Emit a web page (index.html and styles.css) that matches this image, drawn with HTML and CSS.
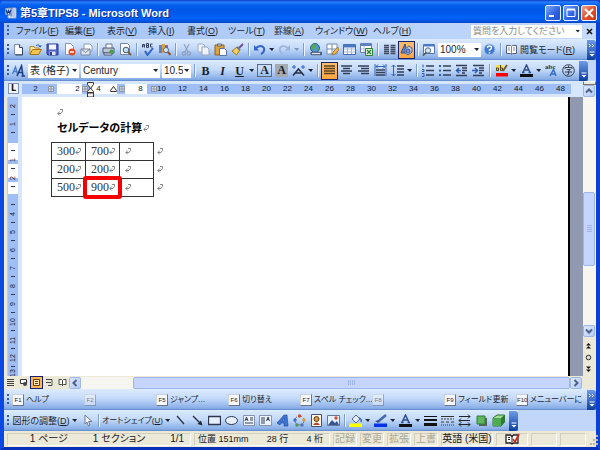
FILE: index.html
```html
<!DOCTYPE html>
<html lang="ja">
<head>
<meta charset="utf-8">
<title>第5章TIPS8 - Microsoft Word</title>
<link rel="stylesheet" href="styles.css">
</head>
<body>
<svg class="defs" aria-hidden="true">
  <symbol id="ret" viewBox="0 0 6 7"><path d="M3 .5h2.5v2L4 4.5H1M2.8 2.5L.8 4.5l2 2" fill="none" stroke="#777" stroke-width=".9"/></symbol>
  <symbol id="chev" viewBox="0 0 8 8"><path d="M1 5.5l3-3 3 3" fill="none" stroke="#4d6185" stroke-width="2"/></symbol>
</svg>
<div class="window">
  <header class="title">
    <svg width="12" height="12" viewBox="0 0 12 12"><path d="M3 1h8v10H3z" fill="#fff" stroke="#8aa5d6"/><path d="M8 3h2M8 5h2M8 7h2M5 9h5" stroke="#6f8dc6"/><path d="M0 1h7v7H0z" fill="#d3e1f8" stroke="#284c9b" stroke-width=".7"/><path d="M1 2.500l1.200 4 1.300-3 1.300 3L6 2.500" fill="none" stroke="#173d91" stroke-width="1.200"/></svg>
    <h1>第5章TIPS8 - Microsoft Word</h1>
    <button class="cap" aria-label="最小化"><svg width="14" height="14" viewBox="0 0 14 14"><path d="M3 10h5" stroke="#fff" stroke-width="2"/></svg></button>
    <button class="cap" aria-label="最大化"><svg width="14" height="14" viewBox="0 0 14 14"><path d="M3 3.500h8v7H3z" fill="none" stroke="#fff"/><path d="M3 3.500h8" stroke="#fff" stroke-width="2"/></svg></button>
    <button class="cap close" aria-label="閉じる"><svg width="14" height="14" viewBox="0 0 14 14"><path d="M3 3l8 8M11 3l-8 8" stroke="#fff" stroke-width="2"/></svg></button>
  </header>

  <nav class="menu">
    <i class="grip"></i>
    <div class="menus">
      <button>ファイル(<u>F</u>)</button><button>編集(<u>E</u>)</button><button>表示(<u>V</u>)</button><button>挿入(<u>I</u>)</button><button>書式(<u>O</u>)</button><button>ツール(<u>T</u>)</button><button>罫線(<u>A</u>)</button><button>ウィンドウ(<u>W</u>)</button><button>ヘルプ(<u>H</u>)</button>
    </div>
    <div class="ask"><input type="text" placeholder="質問を入力してください" aria-label="質問"><i class="tri"></i></div>
    <button class="docclose" aria-label="文書を閉じる"><svg width="7" height="7" viewBox="0 0 7 7"><path d="M1 1l5 5M6 1L1 6" stroke="#111" stroke-width="1.500"/></svg></button>
  </nav>

  <div class="bar">
    <i class="grip"></i>
    <button class="b" aria-label="新規"><svg viewBox="0 0 13 13"><path d="M2.500 1.500h5l3 3v7h-8z" fill="#fff" stroke="#7f8fb0"/><path d="M7.500 1.500v3h3" fill="#dce6f8" stroke="#33435f"/><path d="M10.500 5v7h-7" fill="none" stroke="#33435f"/></svg></button>
    <button class="b" aria-label="開く"><svg viewBox="0 0 13 13"><path d="M1 11V3.500h4l1 1.500h4v2" fill="#ffe9a1" stroke="#b38427"/><path d="M1 11.500l2.500-5h9l-3 5z" fill="#f8c64e" stroke="#a57416"/><path d="M7 2.500q3-2 4 1M9.500 3l2 1 .5-2" fill="none" stroke="#2f5fa8"/></svg></button>
    <button class="b" aria-label="保存"><svg viewBox="0 0 13 13"><path d="M1 1h11v11H2l-1-1z" fill="#5061c4" stroke="#2b398f"/><path d="M3 1.500h7v5H3z" fill="#f3f5ff"/><path d="M3.500 8.500h6V12h-6z" fill="#dfe4f7"/><path d="M4 9h2v3H4z" fill="#2b398f"/></svg></button>
    <button class="b" aria-label="アクセス許可"><svg viewBox="0 0 13 13"><path d="M2.500.5h5l3 3v8h-8z" fill="#fff" stroke="#8794b5"/><circle cx="9" cy="9" r="3.500" fill="#e1491e"/><path d="M7 9h4" stroke="#fff" stroke-width="1.500"/></svg></button>
    <button class="b" aria-label="電子メール"><svg viewBox="0 0 13 13"><path d="M4 1h6l2 2v5H4z" fill="#fff" stroke="#8b98b5"/><path d="M1 6h9v6H1z" fill="#e2e6ef" stroke="#77839c"/><path d="M1 6l4.500 3.500L10 6" fill="none" stroke="#77839c"/></svg></button>
    <i class="sep"></i>
    <button class="b" aria-label="印刷"><svg viewBox="0 0 13 13"><path d="M4 5V1h6v4" fill="#fff" stroke="#68758f"/><path d="M1 5h11v5H1z" fill="#bcc5d4" stroke="#4f5b73"/><path d="M2 10h8v2H2z" fill="#e9edf4" stroke="#4f5b73"/><circle cx="9.500" cy="8.500" r="2" fill="#45a048"/></svg></button>
    <button class="b" aria-label="プレビュー"><svg viewBox="0 0 13 13"><path d="M1.500.5h7l2 2v9h-9z" fill="#fff" stroke="#7585a5"/><circle cx="7" cy="7" r="2.800" fill="#bfe2f2" stroke="#4c5970"/><path d="M9 9l3 3" stroke="#7b5b3b" stroke-width="2"/></svg></button>
    <i class="sep"></i>
    <button class="b" aria-label="スペルチェック"><svg viewBox="0 0 13 13"><path d="M1.500 4.500V1.500h2v3M1.500 3h2M5.500.5v4h2v-4zM5.500 2.500h2M11.500 1h-2v3h2" fill="none" stroke="#333f60"/><path d="M4 8l2.500 4L12 5" fill="none" stroke="#3264c8" stroke-width="2"/></svg></button>
    <button class="b" aria-label="リサーチ"><svg viewBox="0 0 13 13"><path d="M1 2h3v8H1z" fill="#5d7fc9"/><path d="M4 1h3v9H4z" fill="#dba23d"/><path d="M7 2h3v8H7z" fill="#8a5eb0"/><circle cx="8" cy="7" r="2.500" fill="#d8ecfa" stroke="#536384"/><path d="M10 9l2.500 3" stroke="#93502c" stroke-width="2"/></svg></button>
    <i class="sep"></i>
    <button class="b" aria-label="切り取り"><svg viewBox="0 0 13 13"><path d="M4 1l4 8M9 1L5 9" stroke="#8793ad"/><circle cx="4" cy="10.500" r="1.700" fill="none" stroke="#8793ad"/><circle cx="9" cy="10.500" r="1.700" fill="none" stroke="#8793ad"/></svg></button>
    <button class="b" aria-label="コピー"><svg viewBox="0 0 13 13"><path d="M1 1h5l2 2v6H1z" fill="#edf2fb" stroke="#a2aec6"/><path d="M5 4h5l2 2v6H5z" fill="#edf2fb" stroke="#98a5bf"/></svg></button>
    <button class="b" aria-label="貼り付け"><svg viewBox="0 0 13 13"><path d="M1 2h9v10H1z" fill="#dfa13c" stroke="#8f621a"/><path d="M3.500 1h4v2h-4z" fill="#d8dce5" stroke="#5b6578"/><path d="M5.500 5.500h5l2 2v5h-7z" fill="#fff" stroke="#5871a6"/></svg></button>
    <button class="b" aria-label="書式のコピー"><svg viewBox="0 0 13 13"><path d="M12 1L8 5" stroke="#6b4e91" stroke-width="2"/><path d="M6 4l3 3-3.500 5L1 8z" fill="#f4cf62" stroke="#a2781d"/><path d="M6 4l3 3" stroke="#6c7896" stroke-width="2"/></svg></button>
    <i class="sep"></i>
    <button class="b" aria-label="元に戻す"><svg viewBox="0 0 13 13"><path d="M3 5q5-4 8 0 1 4-3 6" fill="none" stroke="#3563c4" stroke-width="2"/><path d="M1 2v5.500h5z" fill="#3563c4"/></svg></button><i class="tri"></i>
    <button class="b" aria-label="やり直し"><svg viewBox="0 0 13 13"><path d="M10 5q-5-4-8 0-1 4 3 6" fill="none" stroke="#9db0d4" stroke-width="1.500"/><path d="M12 2v5.500H7z" fill="#9db0d4"/></svg></button><i class="tri pale"></i>
    <i class="sep wide"></i>
    <button class="b" aria-label="ハイパーリンク"><svg viewBox="0 0 13 13"><circle cx="6" cy="5" r="4.500" fill="#4f97cc" stroke="#2e6384"/><path d="M3 2l3-1 1 3-3 3-2-2zM8 5l2 0-1 4z" fill="#54aa4c"/><path d="M3 10.500h4M8 10.500h4" stroke="#55627d" stroke-width="3.500" stroke-linecap="round"/><path d="M3 10.500h8" stroke="#e4e9f4" stroke-width="1.200"/></svg></button>
    <button class="b" aria-label="罫線"><svg viewBox="0 0 13 13"><path d="M1 1h10v10H1z M6 1v10M1 6h10" fill="#fff" stroke="#7588ae"/><path d="M12 4L7 9l-1 3 3-1 4-4z" fill="#e9b44c" stroke="#986d24" stroke-width=".7"/></svg></button>
    <button class="b" aria-label="表の挿入"><svg viewBox="0 0 13 13"><path d="M.5 1.500h12v10H.5z" fill="#fff" stroke="#426caf"/><path d="M1 3h11" stroke="#4b78c5" stroke-width="3"/><path d="M1 6h11M1 9h11M4.500 4v7M8.500 4v7" stroke="#a5bce1"/></svg></button>
    <button class="b" aria-label="ワークシート"><svg viewBox="0 0 13 13"><path d="M.5.5h11v9H.5z" fill="#fff" stroke="#6580b5"/><path d="M1 2h10" stroke="#5b82c5" stroke-width="2"/><path d="M1 6h5M4 3v6" stroke="#a5bce1"/><path d="M5.500 5.500h7v7h-7z" fill="#e6f3df" stroke="#2f8135"/><path d="M7 7l4 4M11 7l-4 4" stroke="#2f8135" stroke-width="1.400"/></svg></button>
    <i class="sep wide"></i>
    <button class="b" aria-label="段組み"><svg viewBox="0 0 13 13"><path d="M1 2.500h5M1 4.500h5M1 6.500h5M1 8.500h5M1 10.500h5M7.500 2.500h5M7.500 4.500h5M7.500 6.500h5M7.500 8.500h5M7.500 10.500h5" stroke="#414c62" stroke-width="1.400"/></svg></button>
    <button class="b on" aria-label="図形描画"><svg viewBox="0 0 13 13"><path d="M1 10L5 1l2 9z" fill="#5c84d1" stroke="#2e4e96"/><path d="M5 6l4-3 3 2v4l-4 3-3-2z" fill="#c2cbe3" stroke="#51628a"/><circle cx="8" cy="8" r="2" fill="#7c98d8" stroke="#3b5592"/></svg></button>
    <i class="sep"></i>
    <button class="b" aria-label="見出しマップ"><svg viewBox="0 0 13 13"><path d="M1.500 1.500h11v9h-11z" fill="#fff" stroke="#4d76ba"/><path d="M2 2.500h10" stroke="#4d7bcf" stroke-width="2"/><circle cx="6" cy="7.500" r="2.700" fill="#d1ebf5" stroke="#56657e"/><path d="M4 9.500l-3 3" stroke="#5b4a35" stroke-width="1.500"/></svg></button>
    <div class="combo zoom"><select aria-label="ズーム"><option>100%</option></select><i class="tri"></i></div>
    <button class="b" aria-label="ヘルプ"><svg viewBox="0 0 13 13"><circle cx="6.500" cy="6.500" r="5.500" fill="#3f79d3" stroke="#a9c8f4"/><path d="M4.500 5q0-2 2-2t2 1.700Q8.500 6 6.500 7v1M6.500 9v1.400" fill="none" stroke="#fff" stroke-width="1.400"/></svg></button>
    <i class="sep"></i>
    <button class="b" aria-label="閲覧"><svg viewBox="0 0 13 13"><path d="M1.500 2.500h4l1 1 1-1h4v8h-4l-1 1-1-1h-4z" fill="#fff" stroke="#53617c"/><path d="M6.500 3v8M3 5h2M3 7h2M8 5h2M8 7h2" stroke="#7d89a2"/></svg></button>
    <button class="txt">閲覧モード(<u>R</u>)</button>
    <button class="end push" aria-label="オプション"><svg viewBox="0 0 8 18"><path d="M1 3l1.500 1.500L1 6M4 3l1.500 1.500L4 6M1.500 11h5" fill="none" stroke="#fff"/><path d="M1.500 13h5L4 15.500z" fill="#fff"/></svg></button>
  </div>

  <div class="bar">
    <i class="grip"></i>
    <button class="b" aria-label="スタイル"><svg viewBox="0 0 13 13"><path d="M.5 10L3.500 3l2 7M1.500 7.500h3.500" fill="none" stroke="#4579c5" stroke-width="1.300"/><path d="M5 12l4.500-10L11 12M6.500 8.500H11M9.500 12H13" fill="none" stroke="#203f87" stroke-width="1.600"/></svg></button>
    <div class="combo style"><select aria-label="スタイル名"><option>表 (格子)</option></select><i class="tri"></i></div>
    <div class="combo face"><select aria-label="フォント"><option>Century</option></select><i class="tri"></i></div>
    <div class="combo size"><select aria-label="サイズ"><option>10.5</option></select><i class="tri"></i></div>
    <i class="sep"></i>
    <button class="b letter"><b>B</b></button>
    <button class="b letter"><em>I</em></button>
    <button class="b letter"><u>U</u></button><i class="tri"></i>
    <button class="b letter"><span class="boxed">A</span></button>
    <button class="b letter"><span class="shade">A</span></button>
    <button class="b" aria-label="文字の拡大"><svg viewBox="0 0 13 13"><path d="M1 11.500L6.500 5l5.500 6.500M3.500 9h6" fill="none" stroke="#263149" stroke-width="1.600"/><path d="M2 1v4M0 3h4M11 1v4M9 3h4" stroke="#2d62c6"/></svg></button><i class="tri"></i>
    <i class="sep wide"></i>
    <button class="b on" aria-label="両端揃え"><svg viewBox="0 0 13 13"><path d="M1 2h11M1 4.500h11M1 7h11M1 9.500h11" stroke="#594021" stroke-width="1.500"/></svg></button>
    <button class="b" aria-label="中央揃え"><svg viewBox="0 0 13 13"><path d="M1 2h11M3 4.500h7M1 7h11M3 9.500h7" stroke="#333f57" stroke-width="1.500"/></svg></button>
    <button class="b" aria-label="右揃え"><svg viewBox="0 0 13 13"><path d="M1 2h11M4 4.500h8M1 7h11M4 9.500h8" stroke="#333f57" stroke-width="1.500"/></svg></button>
    <button class="b" aria-label="均等割り付け"><svg viewBox="0 0 13 13"><path d="M1 0v12M12 0v12M2 2.500h9M4 .5l-2 2 2 2M9 .5l2 2-2 2" fill="none" stroke="#3264be"/><path d="M2 6h9M2 8.500h9M2 11h9" stroke="#333f57" stroke-width="1.500"/></svg></button>
    <button class="b" aria-label="行間"><svg viewBox="0 0 13 13"><path d="M2.500 1v11M.5 3l2-2 2 2M.5 10l2 2 2-2" fill="none" stroke="#3264be"/><path d="M6 2h7M6 5h7M6 8h7M6 11h7" stroke="#333f57" stroke-width="1.300"/></svg></button><i class="tri"></i>
    <i class="sep"></i>
    <button class="b" aria-label="段落番号"><svg viewBox="0 0 13 13"><path d="M2 .5v3M1 5.500h2v2H1M1 9.500h2v3H1" fill="none" stroke="#2f5cb3"/><path d="M5 2h8M5 6.500h8M5 11h8" stroke="#333f57" stroke-width="1.300"/></svg></button>
    <button class="b" aria-label="箇条書き"><svg viewBox="0 0 13 13"><path d="M1 2h2M1 6.500h2M1 11h2" stroke="#2f5cb3" stroke-width="2"/><path d="M5 2h8M5 6.500h8M5 11h8" stroke="#333f57" stroke-width="1.300"/></svg></button>
    <button class="b" aria-label="インデント解除"><svg viewBox="0 0 13 13"><path d="M1 1.500h11M7 4h5M7 6.500h5M7 9h3M1 11.500h11" stroke="#333f57" stroke-width="1.300"/><path d="M6 6.500H2M4 4L1.500 6.500 4 9" fill="none" stroke="#2f5cb3" stroke-width="1.500"/></svg></button>
    <button class="b" aria-label="インデント"><svg viewBox="0 0 13 13"><path d="M1 1.500h11M7 4h5M7 6.500h5M7 9h3M1 11.500h11" stroke="#333f57" stroke-width="1.300"/><path d="M0 6.500h5M3 4l2.500 2.500L3 9" fill="none" stroke="#2f5cb3" stroke-width="1.500"/></svg></button>
    <i class="sep wide"></i>
    <button class="b" aria-label="蛍光ペン"><svg viewBox="0 0 13 13"><path d="M1 1h7v6H1z" fill="#f7dd52"/><path d="M1.500 4h2v2.500h-2zM5.500 1v5.500h2V4h-2" fill="none" stroke="#4c4420"/><path d="M12 1L8 7" stroke="#785b2c" stroke-width="2"/><path d="M1 9h12v3.500H1z" fill="#f00"/></svg></button><i class="tri"></i>
    <button class="b" aria-label="文字の色"><svg viewBox="0 0 13 13"><path d="M3 8.500L6.500 1 10 8.500M4 6h5M2 8.500h2.500M8.500 8.500H11" fill="none" stroke="#304e8e" stroke-width="1.500"/><path d="M0 10h13v3H0z" fill="#111"/></svg></button><i class="tri"></i>
    <button class="b letter" aria-label="ルビ"><svg viewBox="0 0 13 13"><text x="0" y="5" font-family="Liberation Serif" font-size="7" fill="#333">abc</text><path d="M5 12l3.500-6.500L11 12M6 10h4" fill="none" stroke="#376bc2" stroke-width="1.400"/></svg></button>
    <button class="b" aria-label="囲い文字"><svg viewBox="0 0 13 13"><circle cx="6.500" cy="6.500" r="5.800" fill="none" stroke="#333c4d"/><path d="M6.500 1.500v2M3 5V3.500h7V5M4.500 5.500h4l-2 1.500v3.500l-1.500.5M3 8h7" fill="none" stroke="#333c4d"/></svg></button>
    <i class="sep blank"></i>
    <button class="end" aria-label="オプション"><svg viewBox="0 0 8 18"><path d="M1.500 11h5" stroke="#fff"/><path d="M1.500 13h5L4 15.500z" fill="#fff"/></svg></button>
    <i class="rest"></i>
  </div>

  <main class="work">
    <div class="hrule">
      <span class="tab">L</span>
      <div class="scale">
        <span>2</span><span></span><span>2</span><span>4</span><span></span><span>8</span><span>10</span><span>12</span><span>14</span><span>16</span><span>18</span><span>20</span><span>22</span><span>24</span><span>26</span><span>28</span><span>30</span><span>32</span><span>34</span><span>36</span><span>38</span><span>40</span><span>42</span><span>44</span><span>46</span><span>48</span>
        <svg class="marks" width="140" height="17" viewBox="0 0 140 17"><g stroke="#8e96a6"><path id="m" d="M26.500 5.500h5v5h-5zM29 5v6M26 8h6" fill="#d8dce4"/><use href="#m" x="34"/><use href="#m" x="71"/><use href="#m" x="103"/></g><g fill="#f5f3e8" stroke="#333"><path d="M65.500 1.500h6v2l-3 4-3-4zM65.500 11.500v-1l3-3.500 3 3.500v1zM65.500 12h6v4h-6zM88.500 10.500v-1l3-4 3 4v1z"/></g></svg>
      </div>
    </div>
    <div class="vrule">
      <span>2</span><span>1</span><span></span><span>1</span><span>2</span><span></span><span>4</span><span>5</span><span>6</span><span>7</span><span>8</span><span>9</span><span>10</span><span>11</span><span>12</span><span>13</span>
    </div>
    <article class="page">
      <p><svg class="ret"><use href="#ret"/></svg></p>
      <h2>セルデータの計算<svg class="ret"><use href="#ret"/></svg></h2>
      <table>
        <tr><td>300<svg class="ret"><use href="#ret"/></svg></td><td>700<svg class="ret"><use href="#ret"/></svg></td><td><svg class="ret"><use href="#ret"/></svg></td><td class="eor"><svg class="ret"><use href="#ret"/></svg></td></tr>
        <tr><td>200<svg class="ret"><use href="#ret"/></svg></td><td>200<svg class="ret"><use href="#ret"/></svg></td><td><svg class="ret"><use href="#ret"/></svg></td><td class="eor"><svg class="ret"><use href="#ret"/></svg></td></tr>
        <tr><td>500<svg class="ret"><use href="#ret"/></svg></td><td class="hit">900<svg class="ret"><use href="#ret"/></svg></td><td><svg class="ret"><use href="#ret"/></svg></td><td class="eor"><svg class="ret"><use href="#ret"/></svg></td></tr>
      </table>
    </article>
    <div class="vscroll">
      <i class="split"></i>
      <button class="sb" aria-label="上へ"><svg width="8" height="8"><use href="#chev"/></svg></button>
      <div class="vtrack"><i class="vthumb"><svg width="5" height="7" viewBox="0 0 5 7"><path d="M0 .5h5M0 2.500h5M0 4.500h5M0 6.500h5" stroke="#9db5ee"/></svg></i></div>
      <button class="sb" aria-label="下へ"><svg class="down" width="8" height="8"><use href="#chev"/></svg></button>
      <div class="browse"><svg width="7" height="7" viewBox="0 0 7 7"><path d="M1 3.500L3.500 1 6 3.500zM1 6.500L3.500 4 6 6.500z" fill="#111"/></svg><svg width="7" height="7" viewBox="0 0 7 7"><circle cx="3.500" cy="3.500" r="2.300" fill="#ddd" stroke="#333"/></svg><svg width="7" height="7" viewBox="0 0 7 7"><path d="M1 .5L3.500 3 6 .5zM1 3.500L3.500 6 6 3.500z" fill="#111"/></svg></div>
    </div>
    <div class="hscroll">
      <button class="v" aria-label="下書き"><svg viewBox="0 0 9 9"><path d="M1 1.500h7M1 3.500h7M1 5.500h7M1 7.500h7" stroke="#444"/></svg></button>
      <button class="v" aria-label="Web"><svg viewBox="0 0 9 9"><path d="M1.500 1.500h6v4h-6z" fill="#fff" stroke="#333"/><circle cx="6" cy="6" r="2" fill="#444"/></svg></button>
      <button class="v on" aria-label="印刷レイアウト"><svg viewBox="0 0 9 9"><path d="M1.500 1.500h6v6h-6z" fill="#ffe8b8" stroke="#653e18"/><path d="M3 3.500h3M3 5.500h3" stroke="#653e18"/></svg></button>
      <button class="v" aria-label="アウトライン"><svg viewBox="0 0 9 9"><path d="M1 1.500h6v3M1 4.500h5M3 7.500h4V5" fill="none" stroke="#444"/></svg></button>
      <button class="v" aria-label="閲覧表示"><svg viewBox="0 0 9 9"><path d="M1 1.500h2.500l1 1 1-1H8v5H5.500l-1 1-1-1H1zM4.500 2.500v5" fill="#fff" stroke="#444"/></svg></button>
      <button class="sb" aria-label="左へ"><svg class="left" width="8" height="8"><use href="#chev"/></svg></button>
      <div class="htrack"><i class="hthumb"><svg width="7" height="5" viewBox="0 0 7 5"><path d="M.5 0v5M2.500 0v5M4.500 0v5M6.500 0v5" stroke="#9db5ee"/></svg></i></div>
      <button class="sb" aria-label="右へ"><svg class="right" width="8" height="8"><use href="#chev"/></svg></button>
    </div>
  </main>

  <div class="bar fn">
    <i class="grip"></i>
    <div class="keys">
      <button><kbd>F1</kbd>ヘルプ</button><button disabled><kbd>F2</kbd></button><button><kbd>F5</kbd>ジャンプ...</button><button><kbd>F6</kbd>切り替え</button><button><kbd>F7</kbd>スペル チェック...</button><button disabled><kbd>F8</kbd></button><button><kbd>F9</kbd>フィールド更新</button><button><kbd>F10</kbd>メニューバーに</button>
    </div>
    <button class="end push" aria-label="オプション"><svg viewBox="0 0 8 18"><path d="M1 3l1.500 1.500L1 6M4 3l1.500 1.500L4 6M1.500 11h5" fill="none" stroke="#fff"/><path d="M1.500 13h5L4 15.500z" fill="#fff"/></svg></button>
  </div>

  <div class="bar draw">
    <i class="grip"></i>
    <button class="adjust">図形の調整(<u>D</u>)</button><i class="tri"></i>
    <button class="b" aria-label="選択"><svg viewBox="0 0 13 13"><path d="M4 1v9l2-2 1.500 4 1.500-1-1.500-3.500H11z" fill="#fff" stroke="#6c7a94"/></svg></button>
    <i class="sep"></i>
    <button class="shapes">オートシェイプ(<u>U</u>)</button><i class="tri"></i>
    <button class="b" aria-label="直線"><svg viewBox="0 0 13 13"><path d="M3 2l7 8" stroke="#222b3c" stroke-width="1.200"/></svg></button>
    <button class="b" aria-label="矢印"><svg viewBox="0 0 13 13"><path d="M2 2l8 8" stroke="#222b3c" stroke-width="1.200"/><path d="M11.500 11.500L6.500 10 10 6.500z" fill="#222b3c"/></svg></button>
    <button class="b" aria-label="四角形"><svg viewBox="0 0 13 13"><path d="M.5 2.500h12v8H.5z" fill="#e5effd" stroke="#2d374b" stroke-width="1.300"/></svg></button>
    <button class="b" aria-label="楕円"><svg viewBox="0 0 13 13"><ellipse cx="6.500" cy="6.500" rx="6" ry="4" fill="#e5effd" stroke="#2d374b"/></svg></button>
    <button class="b" aria-label="テキスト"><svg viewBox="0 0 13 13"><path d="M1.500 1.500h11v10h-11z" fill="#eef4fe" stroke="#8392ad"/><path d="M3 7l1.500-4L6 7M3.500 5.500h2M8 4h3M8 6h3M3 9h8" fill="none" stroke="#344158"/></svg></button>
    <button class="b" aria-label="縦書き"><svg viewBox="0 0 13 13"><path d="M.5 1.500h12v10H.5z" fill="#eef4fe" stroke="#8392ad"/><path d="M7.500 7L9 3l1.500 4M8 5.500h2M3 3v7M5 3v7" fill="none" stroke="#344158"/></svg></button>
    <button class="b" aria-label="ワードアート"><svg viewBox="0 0 13 13"><path d="M1 9L8 1h3l1 11H8V9H5l-1 2zM6 7h2V4z" fill="#3d74d3" stroke="#23458f" stroke-width=".6"/></svg></button>
    <button class="b" aria-label="図表"><svg viewBox="0 0 13 13"><circle cx="6.500" cy="6.500" r="4.500" fill="none" stroke="#60718f" stroke-dasharray="3 2"/><circle cx="6.500" cy="2" r="1.700" fill="#d34b2d"/><circle cx="2" cy="6" r="1.700" fill="#3e70cb"/><circle cx="11" cy="6" r="1.700" fill="#db9f2e"/><circle cx="4" cy="11" r="1.700" fill="#4d9950"/><circle cx="9" cy="11" r="1.700" fill="#5573b9"/></svg></button>
    <button class="b" aria-label="クリップアート"><svg viewBox="0 0 13 13"><path d="M1.500.5h10v12h-10z" fill="#fff5df" stroke="#46536b"/><circle cx="6.500" cy="5" r="2.500" fill="#d99a3b" stroke="#583d27"/><path d="M3 11q3.500-5 7 0z" fill="#b63d2c"/></svg></button>
    <button class="b" aria-label="図"><svg viewBox="0 0 13 13"><path d="M.5 1.500h12v10H.5z" fill="#e4effc" stroke="#667690"/><path d="M1 11l4-5 3 3 2-2 2 4z" fill="#365791"/><circle cx="9" cy="4" r="1.700" fill="#cf5033"/></svg></button>
    <i class="sep"></i>
    <button class="b" aria-label="塗りつぶし"><svg viewBox="0 0 13 13"><path d="M3 5l4-4 4 4-4 4z" fill="#e7edf7" stroke="#56657f"/><path d="M10 4q3 1 2 4" fill="none" stroke="#3467be" stroke-width="1.500"/><path d="M0 9.500h13V13H0z" fill="#ff0"/></svg></button><i class="tri"></i>
    <button class="b" aria-label="線の色"><svg viewBox="0 0 13 13"><path d="M12 1L6 6 4 8" stroke="#4569ac" stroke-width="2.500"/><path d="M1 7l4-1-1 3z" fill="#375082"/><path d="M0 9.500h13V13H0z" fill="#0033e8"/></svg></button><i class="tri"></i>
    <button class="b" aria-label="文字色"><svg viewBox="0 0 13 13"><path d="M3 8.500L6.500 1 10 8.500M4 6h5M2 8.500h2.500M8.500 8.500H11" fill="none" stroke="#304e8e" stroke-width="1.500"/><path d="M0 10h13v3H0z" fill="#111"/></svg></button><i class="tri"></i>
    <button class="b" aria-label="線種"><svg viewBox="0 0 13 13"><path d="M0 2.500h13" stroke="#111"/><path d="M0 6h13" stroke="#111" stroke-width="2"/><path d="M0 10.500h13" stroke="#111" stroke-width="3"/></svg></button>
    <button class="b" aria-label="点線"><svg viewBox="0 0 13 13"><path d="M0 2.500h13" stroke="#333"/><path d="M0 5h13" stroke="#333" stroke-dasharray="2 1"/><path d="M0 8h13" stroke="#333" stroke-dasharray="3 2"/><path d="M0 11h13" stroke="#333" stroke-dasharray="1 1"/></svg></button>
    <button class="b" aria-label="矢印種"><svg viewBox="0 0 13 13"><path d="M1 2.500h11M10 .5l2 2-2 2M1 6.500h11M3 4.500l-2 2 2 2M1 10.500h11M10 8.500l2 2-2 2M3 8.500l-2 2 2 2" fill="none" stroke="#222"/></svg></button>
    <button class="b" aria-label="影"><svg viewBox="0 0 13 13"><path d="M4 4h8v8H4z" fill="#56655e"/><path d="M2 2h8v8H2z" fill="#61b65b" stroke="#2f7d38"/></svg></button>
    <button class="b" aria-label="3-D"><svg viewBox="0 0 13 13"><path d="M1 4l4-3h7.500v7L9 12H1z" fill="#a5dc8f" stroke="#2a7434"/><path d="M1 4h8v8H1z" fill="#4dac50"/><path d="M9 4l3.500-3v7L9 12z" fill="#2b7a38"/></svg></button>
    <i class="sep blank"></i>
    <button class="end" aria-label="オプション"><svg viewBox="0 0 8 18"><path d="M1.500 11h5" stroke="#fff"/><path d="M1.500 13h5L4 15.500z" fill="#fff"/></svg></button>
    <i class="rest"></i>
  </div>

  <footer class="status">
    <div class="cell pos"><span>1 ページ</span><span>1 セクション</span><span>1/1</span></div>
    <div class="cell loc"><span>位置 151mm</span><span>28 行</span><span>4 桁</span></div>
    <div class="cell off">記録</div><div class="cell off">変更</div><div class="cell off">拡張</div><div class="cell off">上書</div>
    <div class="cell lang">英語 (米国)</div>
    <div class="cell book"><svg width="15" height="12" viewBox="0 0 15 12"><path d="M1 2h4.500L7 3.500 8.500 2H13v8H8.500L7 11 5.500 10H1z" fill="#fff" stroke="#222" stroke-width="1.300"/><path d="M7 3v8M3 4.500h2M3 6.500h2" stroke="#222"/><path d="M8 6l2 3 4-8" fill="none" stroke="#cf2a1b" stroke-width="1.700"/></svg></div>
    <div class="cell"></div><div class="cell"></div>
    <svg class="sizer" width="10" height="11" viewBox="0 0 10 11"><path d="M7 1h2v2H7zM4 5h2v2H4zM7 5h2v2H7zM1 9h2v2H1zM4 9h2v2H4zM7 9h2v2H7z" fill="#b9b5a0"/></svg>
  </footer>
</div>
</body>
</html>
```
FILE: styles.css
```css
* { box-sizing: border-box; }
body {
  margin: 0;
  font: 10px/14px "Liberation Sans", "Noto Sans CJK JP", sans-serif;
  font-feature-settings: "palt";
  color: #1a1f2b;
}
button, select, input {
  font: inherit;
  font-feature-settings: inherit;
  color: inherit;
  margin: 0;
  padding: 0;
  border: 0;
  background: none;
  white-space: nowrap;
}
button { display: flex; align-items: center; justify-content: center; flex: none; }
svg { display: block; flex: none; }
.defs { position: absolute; width: 0; height: 0; }

.window {
  min-height: 100vh;
  display: flex;
  flex-direction: column;
  background: #ece9d8;
  border: solid #0a3fe0;
  border-width: 0 4px 3px;
  border-color: #0a48e4 #0a3fd8 #0830b8 #0a48e4;
}

/* title bar */
.title {
  height: 23px;
  margin: 0 -4px;
  padding: 2px 3px 0 5px;
  display: flex;
  align-items: center;
  gap: 2px;
  background: linear-gradient(#0a3cc4, #2a7dfa 2px, #0560ee 5px, #0056e4 10px, #0062f8 18px, #0050d8 22px, #0a40b8);
  border-radius: 5px 5px 0 0;
  color: #fff;
}
.title h1 { flex: 1; margin: 0 0 0 1px; font-size: 11px; line-height: 14px; font-weight: bold; text-shadow: 1px 1px #0a2f96; }
.cap { width: 16px; height: 16px; border: 1px solid #e8effd; border-radius: 2px; background: linear-gradient(135deg, #7ba6f6, #2b61e0 60%, #2452cf); }
.cap.close { background: linear-gradient(135deg, #f0a58c, #e2522a 50%, #c93a14); }

/* menu bar */
.menu {
  height: 16px;
  display: flex;
  align-items: center;
  font-size: 9px;
  background: linear-gradient(90deg, #a3c2f6, #c4dafa);
}
.grip { flex: none; width: 2px; height: 12px; margin: 0 1px 0 3px; background: repeating-linear-gradient(#35599c 0 2px, transparent 2px 4px); }
.menus { flex: 1; display: grid; grid-template-columns: 49px 42px 41px 39px 41px 46px 41px 58px 40px; margin-left: 6px; }
.menus button { justify-content: flex-start; }
.ask { display: flex; align-items: center; width: 111px; height: 13px; background: #fff; }
.ask input { flex: 1; min-width: 0; height: 13px; padding-left: 2px; }
.ask input::placeholder { color: #8b8b85; opacity: 1; }
.docclose { width: 14px; }

/* tool bars */
.bar { height: 21px; display: flex; align-items: center; background: linear-gradient(#dcebfe, #c4dafa 45%, #86ade6 92%, #5b83c4); }
.b { width: 17px; height: 18px; }
.b svg { width: 13px; height: 13px; }
.b.on { background: linear-gradient(#fdbf6d, #fba640); border: 1px solid #16226f; }
.sep { flex: none; width: 5px; height: 13px; background: linear-gradient(90deg, #7d9dd2 1px, #f0f6ff 1px 2px, transparent 2px) 2px 0 no-repeat; }
.sep.wide { width: 6px; }
.sep.blank { width: 2px; background: none; }
.tri { flex: none; width: 8px; height: 3px; background: #1b2434; clip-path: polygon(1px 0, 6px 0, 50% 3px); }
.tri.pale { background: #8196bb; }
.txt { font-size: 9px; }
.combo { flex: none; display: flex; align-items: center; height: 14px; background: #fff; }
.combo select { appearance: none; flex: 1; min-width: 0; height: 14px; line-height: 14px; padding-left: 2px; }
.zoom { width: 43px; margin-left: 1px; }
.style { width: 51px; margin: 0 2px 0 1px; }
.face { width: 79px; margin-right: 2px; }
.size { width: 29px; margin-right: 1px; }
.letter { font: bold 12px/14px "Liberation Serif", serif; }
.boxed { padding: 0 2px; border: 1px solid #5c6b85; line-height: 11px; }
.shade { padding: 0 2px; background: #a5a9b0; line-height: 13px; }
.end { width: 9px; height: 20px; background: linear-gradient(#6f9be6, #0b3f9e); border-radius: 0 3px 3px 0; }
.end svg { width: 8px; height: 18px; }
.push { margin-left: auto; }
.rest { flex: 1; align-self: stretch; background: #c0d7f9; }

/* document area */
.work {
  flex: 1;
  min-height: 0;
  display: grid;
  grid-template-columns: 18px 1fr 13px;
  grid-template-rows: 16px 1fr 13px;
}
.hrule { grid-column: 1 / 3; display: flex; background: #d6e6fd; overflow: hidden; }
.tab { flex: none; width: 11px; height: 11px; margin: 2px 3px 0 4px; border: 1px solid #7f93b8; background: #f2f6fd; font: bold 8px/9px "DejaVu Sans", sans-serif; text-align: center; color: #111; }
.scale {
  position: relative;
  flex: 1;
  height: 10px;
  margin: 3px 16px 0 0;
  padding-left: 3px;
  display: flex;
  background: linear-gradient(90deg, transparent 35px, #fff 35px 60px, transparent 60px 70px, #fff 70px 95px, transparent 95px 103px, #fff 103px 125px, transparent 125px) #9ebef5;
}
.scale span { flex: none; width: 21px; text-align: center; font-size: 8px; line-height: 10px; color: #101828; }
.marks { position: absolute; left: 0; top: -3px; }
.vrule {
  width: 10px;
  margin-left: 4px;
  box-shadow: 4px 0 #d6e6fd, -1px 0 #b8cdf0;
  overflow: hidden;
  clip-path: inset(0 -4px 0 -1px);
  background: linear-gradient(transparent 46px, #fff 46px 63px, transparent 63px 67px, #fff 67px 81px, transparent 81px 85px, #fff 85px 97px, transparent 97px) #9ebef5;
  height: 0;
  min-height: 100%;
}
.vrule span {
  display: flex;
  align-items: center;
  justify-content: center;
  width: 10px;
  height: 18px;
  writing-mode: vertical-rl;
  transform: rotate(180deg);
  font-size: 7px;
  line-height: 10px;
  color: #101828;
  background: linear-gradient(#2c3850, #2c3850) 3px 0 / 4px 1px no-repeat;
}
.vrule span:last-child { height: 12px; background: none; }
.page { min-width: 0; margin-right: 13px; padding: 7px 0 0 29px; background: #fff; border-right: 2px solid #000; box-shadow: 13px 0 #9199b0; font-family: "Liberation Serif", "Noto Sans CJK JP", serif; }
.page p, .page h2 { margin: 0 0 0 6px; height: 16px; display: flex; align-items: center; gap: 1px; }
.page h2 { font-size: 11px; color: #000; }
.ret { display: inline-block; width: 6px; height: 7px; }
.page table { margin-top: 6px; border-collapse: collapse; font-size: 12px; line-height: 17px; color: #333; }
.page td { width: 34px; height: 18px; padding: 0 0 0 5px; border: 1px solid #333; white-space: nowrap; }
.page td.eor { border: 0; width: 12px; padding-left: 3px; }
.hit { position: relative; }
.hit::after { content: ""; position: absolute; inset: -3px; border: 4px solid #f40000; border-radius: 3px; }

/* scroll bars */
.vscroll { grid-column: 3; grid-row: 1 / 3; display: flex; flex-direction: column; min-height: 0; background: #ece9d8; }
.split { height: 4px; border: 1px solid #77746a; border-top-color: #fff; }
.sb { width: 12px; height: 12px; background: linear-gradient(135deg, #dde8ff, #b5caf8); border: 1px solid #9eb7ea; border-radius: 2px; }
.down { transform: rotate(180deg); }
.left { transform: rotate(-90deg); }
.right { transform: rotate(90deg); }
.vtrack { flex: 1; display: grid; grid-template-rows: 96fr 74fr 60fr; background: #f6f5ef; }
.vthumb, .hthumb { display: flex; align-items: center; justify-content: center; background: #c5d5fd; border: 1px solid #9db5ec; border-radius: 2px; }
.vthumb { grid-row: 2; width: 12px; }
.browse { height: 39px; display: flex; flex-direction: column; align-items: center; justify-content: space-around; padding: 2px 2px 0 0; }
.hscroll { grid-column: 1 / 4; display: flex; align-items: center; padding-right: 14px; background: #ece9d8; }
.v { width: 13px; height: 13px; }
.v svg { width: 9px; height: 9px; }
.v.on { background: #fdb555; border: 1px solid #16226f; }
.htrack { flex: 1; display: grid; grid-template-columns: 52fr 437fr; height: 12px; background: #f6f5ef; }
.hthumb { grid-column: 2; }

/* function keys and drawing bar */
.keys { flex: 1; min-width: 0; display: grid; grid-template-columns: repeat(8, 72px); margin-left: 2px; font-size: 8px; }
.keys button { justify-content: flex-start; gap: 2px; }
kbd { flex: none; width: 12px; height: 12px; border: 1px solid #66738c; border-top-color: #c9d1de; border-left-color: #c9d1de; background: #f6f8fc; font: 6px/10px "Liberation Sans", sans-serif; text-align: center; color: #222; }
:disabled kbd { opacity: .5; }
.adjust { width: 60px; font-size: 9px; }
.shapes { width: 63px; font-size: 8px; }
.draw .grip { margin-right: 2px; }

/* status bar */
.status { height: 16px; display: flex; align-items: center; gap: 3px; padding: 1px 0 1px 3px; line-height: 12px; color: #16161a; }
.cell { flex: none; height: 13px; width: 26px; display: flex; align-items: center; justify-content: center; white-space: nowrap; border: 1px solid #d3cfbd; border-right-color: #fff; border-bottom-color: #fff; }
.pos { width: 184px; gap: 25px; padding-left: 16px; }
.loc { width: 136px; justify-content: space-between; padding: 0 6px 0 3px; font-size: 9px; }
.off { width: 24px; color: #aaa692; }
.lang { width: 52px; }
.book { width: 32px; }
.sizer { margin-left: auto; }
```
